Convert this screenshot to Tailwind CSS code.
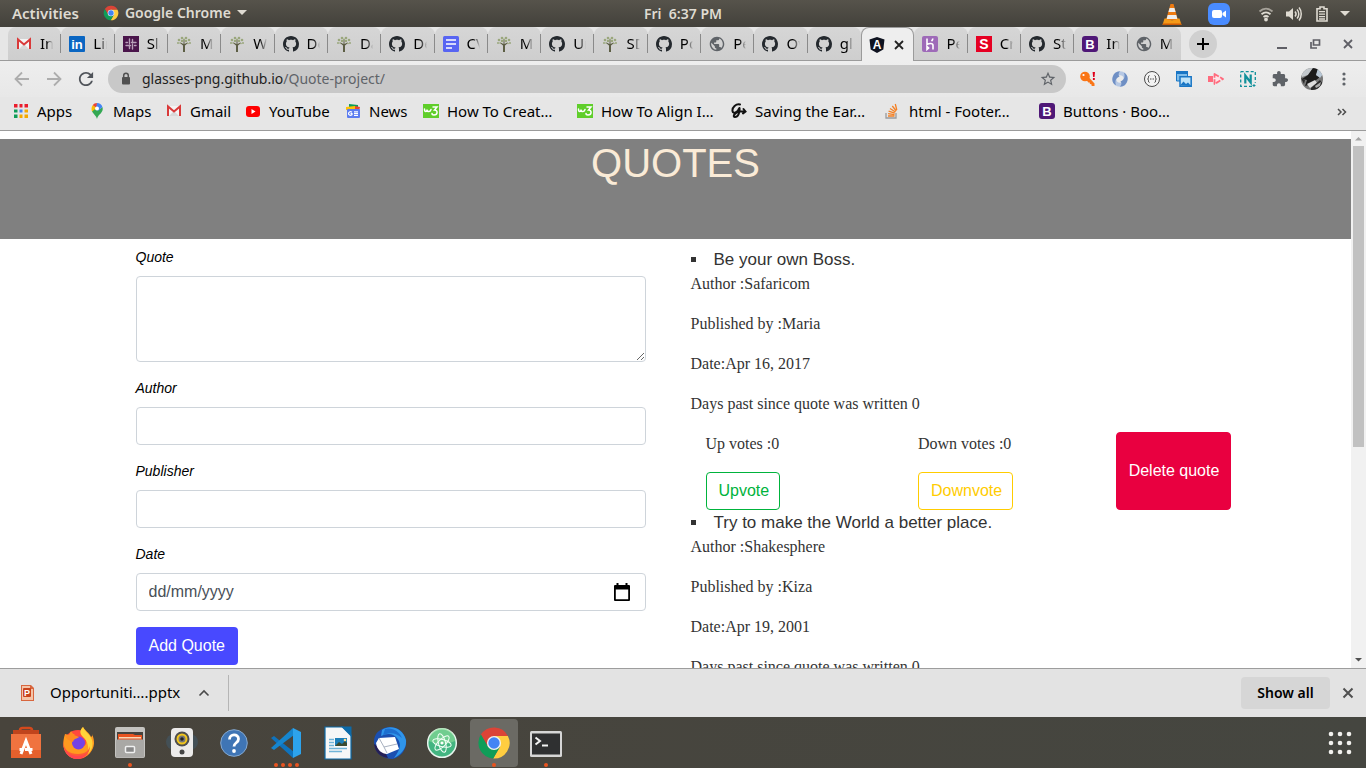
<!DOCTYPE html>
<html lang="en-GB">
<head>
<meta charset="utf-8">
<title>Quotes</title>
<script src="https://cdn.jsdelivr.net/npm/@tailwindcss/browser@4"></script>
</head>
<body class="h-screen flex flex-col overflow-hidden bg-[#e3e3e3] font-['Noto_Sans',sans-serif] text-sm text-[#1c1c1c]">

<svg class="hidden" aria-hidden="true">
  <symbol id="chrome" viewBox="0 0 48 48"><path fill="#db4437" d="M24 14H43.6A22 22 0 0 0 5.54 12.03L15.34 29Z"/><path fill="#ffcd40" d="M32.66 29L22.86 45.97A22 22 0 0 0 43.6 14H24Z"/><path fill="#0f9d58" d="M15.34 29L5.54 12.03A22 22 0 0 0 22.86 45.97L32.66 29Z"/><circle cx="24" cy="24" r="10" fill="#f1f1f1"/><circle cx="24" cy="24" r="8" fill="#4285f4"/></symbol>
  <symbol id="github" viewBox="0 0 16 16"><path fill="#24292e" d="M8 0C3.58 0 0 3.58 0 8c0 3.54 2.29 6.53 5.47 7.59.4.07.55-.17.55-.38 0-.19-.01-.82-.01-1.49-2.01.37-2.53-.49-2.69-.94-.09-.23-.48-.94-.82-1.13-.28-.15-.68-.52-.01-.53.63-.01 1.08.58 1.23.82.72 1.21 1.87.87 2.33.66.07-.52.28-.87.51-1.07-1.78-.2-3.64-.89-3.64-3.95 0-.87.31-1.59.82-2.15-.08-.2-.36-1.02.08-2.12 0 0 .67-.21 2.2.82.64-.18 1.32-.27 2-.27s1.36.09 2 .27c1.53-1.04 2.2-.82 2.2-.82.44 1.1.16 1.92.08 2.12.51.56.82 1.27.82 2.15 0 3.07-1.87 3.75-3.65 3.95.29.25.54.73.54 1.48 0 1.07-.01 1.93-.01 2.2 0 .21.15.46.55.38A8.01 8.01 0 0 0 16 8c0-4.42-3.58-8-8-8z"/></symbol>
  <symbol id="gmail" viewBox="0 0 16 16"><path fill="#f4f4f4" d="M1 3h14v10H1z"/><path fill="#d8d8d8" d="M3 13l5-5 5 5z"/><path fill="none" stroke="#d93a3a" stroke-width="2" d="M2 13V3.500l6 5 6-5V13"/></symbol>
  <symbol id="tree" viewBox="0 0 16 16"><path fill="#5d5f45" d="M7 16V9.500L4 7l.5-.5L7.500 8V4h1v4l3-1.500.5.5-3 2.500V16z"/><g fill="#9aa77c"><circle cx="3" cy="4" r="1.300"/><circle cx="6" cy="2" r="1.300"/><circle cx="10" cy="2" r="1.300"/><circle cx="13" cy="4" r="1.300"/><circle cx="14" cy="7" r="1"/><circle cx="2" cy="7" r="1"/><circle cx="6" cy="5" r="1.200"/><circle cx="10" cy="5" r="1.200"/><circle cx="12" cy="7.500" r=".8"/><circle cx="4" cy="7" r=".8"/><circle cx="8" cy="3.500" r="1"/></g></symbol>
  <symbol id="globe" viewBox="1 1 22 22"><path fill="#5f6368" d="M12 2C6.480 2 2 6.480 2 12s4.480 10 10 10 10-4.480 10-10S17.520 2 12 2zm-1 17.930c-3.950-.49-7-3.850-7-7.930 0-.62.08-1.210.21-1.790L9 15v1c0 1.100.9 2 2 2v1.930zm6.900-2.540c-.26-.81-1-1.390-1.900-1.390h-1v-3c0-.55-.45-1-1-1H8v-2h2c.55 0 1-.45 1-1V7h2c1.100 0 2-.9 2-2v-.41c2.930 1.190 5 4.060 5 7.410 0 2.080-.8 3.970-2.100 5.390z"/></symbol>
  <symbol id="boot" viewBox="0 0 16 16"><rect width="16" height="16" rx="3" fill="#4f1877"/><text x="8" y="13" text-anchor="middle" font-family="Liberation Sans" font-weight="700" font-size="13" fill="#fff">B</text></symbol>
  <symbol id="w3" viewBox="0 0 16 16"><rect y="1" width="16" height="14" fill="#5fce2a"/><path fill="none" stroke="#fff" stroke-width="1.500" stroke-linecap="round" d="M1.500 6c0 3.500 2.500 3 2.500.5C4 9 7 9.500 8 6.500M10 4h4l-2.500 3c3.500 0 3.500 5-.5 5-1 0-2-.5-2-1.500"/></symbol>
  <symbol id="docs" viewBox="0 0 16 16"><rect width="16" height="16" rx="1.500" fill="#5865f2"/><path stroke="#fff" stroke-width="1.600" d="M3 4h10M3 8h10M3 12h6"/></symbol>
</svg>

<!-- Desktop top bar -->
<header class="h-[27px] shrink-0 grid grid-cols-[1fr_auto_1fr] items-center bg-linear-to-b from-[#56534b] to-[#43413b] text-[#dfdbd2] text-sm font-semibold">
  <div class="flex items-center pl-3 gap-6">
    <button type="button" class="text-[15px]">Activities</button>
    <button type="button" class="flex items-center gap-1.5"><svg class="size-4"><use href="#chrome"/></svg>Google Chrome <svg class="w-2.5 h-1.5" viewBox="0 0 10 6"><path fill="currentColor" d="M0 0h10L5 5z"/></svg></button>
  </div>
  <button type="button" class="whitespace-pre">Fri  6:37 PM</button>
  <div class="flex items-center justify-end pr-4">
    <svg class="size-6 mr-6" viewBox="0 0 24 24"><path fill="#ee7a10" d="M10.500 2h3L18 18H6z"/><path fill="#eee" d="M9.600 6h4.800l1.200 4H8.400zM7.700 13h8.600l1.100 4H6.600z"/><path fill="#f59a18" d="M4.500 16.500h2c1 2.200 10 2.200 11 0h2L21.500 23h-19z"/><path fill="#cf5b05" d="M2.700 21.500h18.600v1.500H2.700z"/></svg>
    <svg class="size-[22px] mr-7" viewBox="0 0 22 22"><rect width="22" height="22" rx="6" fill="#4a8cff"/><rect x="4" y="7" width="10" height="8" rx="2" fill="#fff"/><path fill="#fff" d="M14.500 10l3.500-2.500v7L14.500 12z"/></svg>
    <svg class="size-4 mr-3" viewBox="0 0 16 16" fill="none" stroke="#dfdbd2" stroke-width="1.800"><path opacity=".6" d="M1.500 5.500c4-3.700 9-3.700 13 0"/><path d="M3.500 8.300c3-2.600 6-2.600 9 0M5.500 11c1.700-1.300 3.300-1.300 5 0"/><circle cx="8" cy="13.500" r="1" fill="#dfdbd2"/></svg>
    <svg class="size-4 mr-3" viewBox="0 0 16 16" fill="none" stroke="#dfdbd2" stroke-width="1.500"><path fill="#dfdbd2" stroke="none" d="M0 5.500h3L7 2v12l-4-3.500H0z"/><path d="M9 5.500c1.300 1.500 1.300 3.500 0 5M11 3.500c2.400 2.500 2.400 6.500 0 9M13 1.500c3 3.500 3 9.500 0 13"/></svg>
    <svg class="size-4 mr-2.5" viewBox="0 0 16 16"><path fill="none" stroke="#dfdbd2" stroke-width="1.600" d="M6 2.800V1h4v1.800h3V15H3V2.800z"/><path stroke="#dfdbd2" stroke-width="1.300" d="M5 5.700h6M5 8.200h6M5 10.600h6M5 13h6"/></svg>
    <svg class="w-2.5 h-1.5" viewBox="0 0 10 6"><path fill="#dfdbd2" d="M0 0h10L5 5z"/></svg>
  </div>
</header>

<!-- Tab strip -->
<nav class="h-[34px] shrink-0 flex items-stretch pl-2 bg-[#e6e6e6] border-b border-[#9b9b9b] text-black text-[15px]" aria-label="Tabs">
  <div class="flex-1 min-w-0 grid grid-cols-[repeat(22,minmax(0,1fr))] [&>button]:relative [&>button]:flex [&>button]:items-center [&>button]:gap-2 [&>button]:px-2 [&>button]:rounded-t-lg [&>button]:bg-linear-to-b [&>button]:from-[#d6d6d6] [&>button]:to-[#cecece] [&>button]:after:absolute [&>button]:after:right-0 [&>button]:after:inset-y-[7px] [&>button]:after:w-px [&>button]:after:bg-[#8a8a8a] [&_svg]:size-4 [&_svg]:shrink-0 [&_span]:min-w-0 [&_span]:overflow-hidden [&_span]:whitespace-nowrap [&_span]:mask-r-from-50%">
    <button type="button"><svg><use href="#gmail"/></svg><span>Inb</span></button>
    <button type="button"><svg viewBox="0 0 16 16"><rect width="16" height="16" rx="1" fill="#0a66c2"/><text x="8" y="12.500" text-anchor="middle" font-family="Liberation Sans" font-weight="700" font-size="13" fill="#fff">in</text></svg><span>Lin</span></button>
    <button type="button"><svg viewBox="0 0 16 16"><rect width="16" height="16" fill="#4a154b"/><path stroke="#b9a0ba" stroke-width="1.400" stroke-linecap="round" d="M6.500 3v4.500M9.500 8.500V13M9.500 3.500v3.500M6.500 9v3.500M3 6.500h1.500M8.500 6.500H13M3 9.500h4.500M11.500 9.500H13"/></svg><span>Sla</span></button>
    <button type="button"><svg><use href="#tree"/></svg><span>Mo</span></button>
    <button type="button"><svg><use href="#tree"/></svg><span>W</span></button>
    <button type="button"><svg><use href="#github"/></svg><span>De</span></button>
    <button type="button"><svg><use href="#tree"/></svg><span>Da</span></button>
    <button type="button"><svg><use href="#github"/></svg><span>De</span></button>
    <button type="button"><svg><use href="#docs"/></svg><span>CV</span></button>
    <button type="button"><svg><use href="#tree"/></svg><span>M</span></button>
    <button type="button"><svg><use href="#github"/></svg><span>Un</span></button>
    <button type="button"><svg><use href="#tree"/></svg><span>SD</span></button>
    <button type="button"><svg><use href="#github"/></svg><span>Po</span></button>
    <button type="button"><svg><use href="#globe"/></svg><span>Pe</span></button>
    <button type="button"><svg><use href="#github"/></svg><span>Ov</span></button>
    <button type="button" class="after:hidden"><svg><use href="#github"/></svg><span>gl</span></button>
    <div class="flex items-center gap-1.5 pl-[7px] -mb-px rounded-t-lg border-x border-t border-[#9b9b9b] bg-[#eee]">
      <svg viewBox="0 0 16 16"><path fill="#0f1320" d="M8 0l7.500 2.600-1.200 10L8 16l-6.300-3.400-1.200-10z"/><text x="8" y="12" text-anchor="middle" font-family="Liberation Sans" font-weight="700" font-size="12" fill="#fff">A</text></svg>
      <button type="button" aria-label="Close tab"><svg viewBox="0 0 16 16"><path stroke="#222" stroke-width="1.800" d="M4 4l8 8M12 4l-8 8"/></svg></button>
    </div>
    <button type="button"><svg viewBox="0 0 16 16"><rect width="16" height="16" rx="2" fill="#9e6ab8"/><path fill="none" stroke="#fff" stroke-width="1.600" d="M5 2.500v6c2-1.200 6-1.800 6 1v4M10.800 2.500c0 1-.5 2-1.300 2.700M5 10.500v3l1.600-1.500z"/></svg><span>Pe</span></button>
    <button type="button"><svg viewBox="0 0 16 16"><rect width="16" height="16" fill="#e60023"/><text x="8" y="13" text-anchor="middle" font-family="Liberation Sans" font-weight="700" font-size="14" fill="#fff">S</text></svg><span>Cr</span></button>
    <button type="button"><svg><use href="#github"/></svg><span>St</span></button>
    <button type="button"><svg><use href="#boot"/></svg><span>In</span></button>
    <button type="button" class="after:hidden"><svg><use href="#globe"/></svg><span>My</span></button>
  </div>
  <div class="w-[185px] shrink-0 flex items-center pl-2 pr-3">
    <button type="button" aria-label="New tab" class="size-7 rounded-full bg-[#d0d0d0] grid place-items-center mr-auto"><svg class="size-3" viewBox="0 0 12 12"><path stroke="#000" stroke-width="2" d="M6 0v12M0 6h12"/></svg></button>
    <div class="flex gap-[21px]">
      <button type="button" aria-label="Minimise"><svg class="size-3" viewBox="0 0 12 12"><path stroke="#5f5f66" stroke-width="2" d="M1 10h10"/></svg></button>
      <button type="button" aria-label="Restore"><svg class="size-3" viewBox="0 0 12 12"><path fill="none" stroke="#5f5f66" stroke-width="1.700" d="M4.500 2h6v5h-6zM2 4v6h6"/></svg></button>
      <button type="button" aria-label="Close"><svg class="size-3" viewBox="0 0 12 12"><path stroke="#5f5f66" stroke-width="1.800" d="M2 2l8 8M10 2l-8 8"/></svg></button>
    </div>
  </div>
</nav>

<!-- Address bar -->
<div class="h-9 shrink-0 flex items-center bg-linear-to-b from-[#eee] to-[#e8e8e8] pl-3.5 pr-3.5">
  <div class="flex gap-4 mr-3.5 [&_svg]:size-4">
    <button type="button" aria-label="Back"><svg viewBox="0 0 16 16"><path fill="none" stroke="#adadad" stroke-width="1.800" d="M15 8H2M8 1.500L1.500 8 8 14.500"/></svg></button>
    <button type="button" aria-label="Forward"><svg viewBox="0 0 16 16"><path fill="none" stroke="#adadad" stroke-width="1.800" d="M1 8h13M8 1.500L14.500 8 8 14.500"/></svg></button>
    <button type="button" aria-label="Reload"><svg viewBox="3 3 18 18"><path fill="#50545a" d="M17.650 6.350C16.200 4.900 14.210 4 12 4c-4.420 0-7.990 3.580-7.990 8s3.570 8 7.990 8c3.730 0 6.840-2.550 7.730-6h-2.080c-.82 2.330-3.040 4-5.650 4-3.310 0-6-2.690-6-6s2.690-6 6-6c1.660 0 3.140.69 4.220 1.780L13 11h7V4l-2.350 2.350z"/></svg></button>
  </div>
  <div class="flex-1 h-7 rounded-full bg-[#c8c8c8] flex items-center pl-2.5 pr-2.5">
    <svg class="size-4" viewBox="0 0 16 16"><rect x="4" y="6" width="8" height="7.500" rx="1" fill="#505050"/><path fill="none" stroke="#505050" stroke-width="1.500" d="M5.700 7V4.500a2.300 2.300 0 0 1 4.600 0V7"/></svg>
    <div class="ml-2 text-sm text-[#5f6368]"><span class="text-[#1e1e1e]">glasses-png.github.io</span>/Quote-project/</div>
    <button type="button" aria-label="Bookmark" class="ml-auto"><svg class="size-4" viewBox="1 1 22 22"><path fill="#5f6368" d="M22 9.240l-7.190-.62L12 2 9.190 8.630 2 9.240l5.460 4.730L5.820 21 12 17.270 18.180 21l-1.630-7.030L22 9.240zM12 15.400l-3.760 2.270 1-4.280-3.320-2.880 4.380-.38L12 6.100l1.710 4.040 4.380.38-3.320 2.880 1 4.280L12 15.400z"/></svg></button>
  </div>
  <div class="flex items-center gap-4 ml-3.5 [&_svg]:size-4">
    <svg viewBox="0 0 16 16"><g fill="#fa7516"><circle cx="5" cy="5.500" r="4.800"/><path d="M6 8.500l2.500-2.500 6 6.500v2.500h-2.800l-.3-1.700-1.500-.2-.2-1.600-1.300-.1z"/></g><circle cx="3.500" cy="4" r="1.100" fill="#fff"/><path fill="#e0001b" d="M12.600 1h2.400l-.5 5h-1.400zM12.900 7h1.900v2h-1.900z"/></svg>
    <svg viewBox="0 0 16 16"><circle cx="8" cy="8" r="5.700" fill="none" stroke="#b6c8e4" stroke-width="4"/><path fill="#6f8fc4" d="M8 .3A7.700 7.700 0 0 0 4 14.500C2.500 10 4 7 7.500 5.500 6 4 6.500 2 8 .3zM8 15.700A7.700 7.700 0 0 0 12 1.500c1.500 4.500 0 7.500-3.500 9 1.500 1.500 1 3.500-.5 5.200z"/></svg>
    <svg viewBox="0 0 16 16" fill="none" stroke="#4a4a4a"><circle cx="8" cy="8" r="7.500" fill="#f3f3f3"/><path d="M5.500 4.500c-2 0 0 3.500-2 3.500 2 0 0 3.500 2 3.500M10.500 4.500c2 0 0 3.500 2 3.500-2 0 0 3.500-2 3.500M6 8h1M7.500 8h1M9 8h1"/></svg>
    <svg viewBox="0 0 16 16"><path fill="#7fbdea" stroke="#1976c5" d="M.5 1h11v9H.5z"/><path fill="#1976c5" d="M0 0h12v3H0z"/><path fill="#bfe3f8" stroke="#1976c5" stroke-width="1.500" d="M4 5.800h11.200v9.400H4z"/><path fill="#1976c5" d="M4 14.500l3.500-4 2.500 2.500 2-1.500 3.200 3.500z"/></svg>
    <svg viewBox="0 0 16 16"><path fill="#ff6b7d" d="M0 5h5v6H0z"/><path fill="#ffe3e6" stroke="#ff6b7d" stroke-width="1.800" stroke-linejoin="round" d="M6.500 3l8.500 5-8.500 5z" stroke-dasharray="5 1.500"/></svg>
    <svg viewBox="0 0 16 16"><path fill="none" stroke="#10909a" stroke-width="1.300" stroke-dasharray="3 2" d="M.7.7h14.600v11M12 15.300H.7V.7"/><path fill="none" stroke="#10909a" stroke-width="2.200" d="M5.300 12.500V4.500l5.400 7V3.500"/><path stroke="#10909a" d="M12.500 14.500h3M14 13v3"/></svg>
    <svg viewBox="1 1 22 22"><path fill="#5f6368" d="M20.500 11H19V7c0-1.100-.9-2-2-2h-4V3.500C13 2.120 11.880 1 10.500 1S8 2.120 8 3.500V5H4c-1.100 0-1.990.9-1.990 2v3.800H3.500c1.490 0 2.700 1.210 2.700 2.700s-1.210 2.700-2.700 2.700H2V20c0 1.100.9 2 2 2h3.800v-1.500c0-1.490 1.210-2.700 2.700-2.700 1.490 0 2.700 1.210 2.700 2.700V22H17c1.100 0 2-.9 2-2v-4h1.500c1.380 0 2.500-1.120 2.500-2.500S21.880 11 20.500 11z"/></svg>
    <div class="size-[22px] -mx-[3px] rounded-full overflow-hidden"><svg viewBox="0 0 22 22" class="!size-full"><rect width="22" height="22" fill="#777"/><path fill="#c3c8cc" d="M0 0h12L7 7 1 9z"/><path fill="#1b1b1b" d="M12 0h6l-3 7 4 2-9 7-6 2 2-6-5-1 6-4z"/><path fill="#b9c8d6" d="M17 0l5 6-3 4-4-3z"/><path fill="#ddd" d="M6 16l8-4 2 3-7 5z"/><path fill="#2a2a2a" d="M10 20l9-8 3 4-6 6h-6zM0 10l4 2-1 4z"/><path fill="#aaa" d="M14 18l6-4-1 4-4 2z"/></svg></div>
    <svg viewBox="0 0 16 16" fill="#5f6368"><circle cx="8" cy="3" r="1.600"/><circle cx="8" cy="8" r="1.600"/><circle cx="8" cy="13" r="1.600"/></svg>
  </div>
</div>

<!-- Bookmarks -->
<div class="h-[34px] shrink-0 flex items-center bg-[#e6e6e6] border-b border-[#9b9b9b] pb-1 pl-[13px] text-black text-[15px] [&>a]:flex [&>a]:items-center [&>a]:gap-2 [&>a]:whitespace-nowrap [&>a]:shrink-0 [&_svg]:size-4 [&_svg]:shrink-0">
  <a href="#" class="w-[76px]"><svg viewBox="0 0 16 16"><g fill="#ea1d2c"><path d="M1 1h4v4H1zM6 1h4v4H6zM11 1h4v4h-4z"/></g><path fill="#0f9d58" d="M1 6h4v4H1zM1 11h4v4H1z"/><path fill="#4285f4" d="M6 6h4v4H6z"/><path fill="#f4a900" d="M11 6h4v4h-4zM6 11h4v4H6zM11 11h4v4h-4z"/><path stroke="#e6e6e6" stroke-width="2" d="M5.500 0v16M10.500 0v16M0 5.500h16M0 10.500h16"/></svg>Apps</a>
  <a href="#" class="w-[77px]"><svg viewBox="0 0 16 16"><path fill="#34a853" d="M8 16c-.5-3-4-5.500-5-7.500l3-4 5 1.500 2.500-2c1.500 6-4.500 7-5.500 12z"/><path fill="#4285f4" d="M8 0c2.500 0 4.700 1.600 5.400 4L9 8 6 4z"/><path fill="#ea4335" d="M3.700 2.200L7 5 8 0C6.300 0 4.700.8 3.700 2.200z"/><path fill="#fbbc04" d="M3 8.500C2 6 2.600 3.500 3.700 2.200L7.500 5z"/><circle cx="8" cy="5.500" r="2" fill="#fff"/></svg>Maps</a>
  <a href="#" class="w-[79px]"><svg><use href="#gmail"/></svg>Gmail</a>
  <a href="#" class="w-[100px]"><svg viewBox="0 0 16 16"><rect x="1" y="3" width="14" height="11" rx="3" fill="#f00"/><path fill="#fff" d="M6.500 6v5l4-2.500z"/></svg>YouTube</a>
  <a href="#" class="w-[78px]"><svg viewBox="0 0 16 16"><path fill="#0c9d58" d="M4 1l9 1v5H4z"/><path fill="#ea4335" d="M10 3l5 1-1 4h-4z"/><path fill="#ffc107" d="M1 4l9-1v4H1z"/><rect x="2" y="6" width="13" height="9" rx="1" fill="#5b7cf0"/><path fill="none" stroke="#fff" stroke-width="1.200" d="M7 9.200c-2-1.500-3.500.3-3.500 1.300s1.500 2.700 3.500 1.200v-1H5.500M9 8.800h4M9 10.500h4M9 12.300h4"/></svg>News</a>
  <a href="#" class="w-[154px]"><svg><use href="#w3"/></svg>How To Creat…</a>
  <a href="#" class="w-[154px]"><svg><use href="#w3"/></svg>How To Align I…</a>
  <a href="#" class="w-[154px]"><svg viewBox="0 0 16 16"><path fill="none" stroke="#111" stroke-width="2" stroke-linecap="round" d="M9 1.500C5 .5 1 4.500 1.500 8S7 9 8 5.500M8.500 5c.5 5-1.500 9-4.500 9-2.500 0-1-4 4-5.500h6M12.500 6l2 2.500-2.500 2"/></svg>Saving the Ear…</a>
  <a href="#" class="w-[154px]"><svg viewBox="0 0 16 16"><path fill="none" stroke="#9a9b9d" stroke-width="1.300" d="M1 10v5h10v-5"/><path stroke="#f48024" stroke-width="1.300" d="M3 13h6.500M3.100 10.700l6.400.9M3.600 8.200l6.200 2M5 5.500l5.500 3.500M7.300 3l4 5M10.300 1l1.500 6"/></svg>html - Footer…</a>
  <a href="#" class="w-[154px]"><svg><use href="#boot"/></svg>Buttons · Boo…</a>
  <button type="button" aria-label="More bookmarks" class="ml-auto mr-4"><svg viewBox="0 0 16 16"><path fill="none" stroke="#4c4c4c" stroke-width="1.500" d="M4 5l3 3-3 3M8.500 5l3 3-3 3"/></svg></button>
</div>

<!-- Page -->
<div class="flex-1 min-h-0 flex bg-white">
  <main class="flex-1 min-w-0 overflow-hidden pt-2 font-['Liberation_Sans',sans-serif] text-base text-[#212529]">
    <h1 class="h-[100px] bg-[#808080] text-[#faebd7] text-[40px] leading-[48px] text-center">QUOTES</h1>
    <div class="max-w-[1140px] mx-auto px-[15px] pt-2 grid grid-cols-2">
      <form class="pl-[15px] pr-[30px] [&_label]:block [&_label]:mb-2 [&_label]:italic [&_label]:text-sm [&_label]:leading-[21px] [&_label]:text-black [&_input]:block [&_input]:w-full [&_input]:h-[38px] [&_input]:px-3 [&_input]:mb-4 [&_input]:border [&_input]:border-[#ced4da] [&_input]:rounded [&_input]:text-[#495057]">
        <label for="quote">Quote</label>
        <textarea id="quote" class="block w-full h-[86px] px-3 py-1.5 mb-4 border border-[#ced4da] rounded resize-y"></textarea>
        <label for="author">Author</label>
        <input id="author" type="text">
        <label for="publisher">Publisher</label>
        <input id="publisher" type="text">
        <label for="date">Date</label>
        <div class="relative">
          <input id="date" type="text" inputmode="numeric" placeholder="dd/mm/yyyy" class="placeholder:text-[#495057]">
          <button type="button" aria-label="Open calendar" class="absolute right-4 inset-y-0"><svg class="w-4 h-[18px]" viewBox="0 0 16 18"><path fill="#000" d="M2.500 0h2v2h7V0h2v2H15a1 1 0 0 1 1 1v14a1 1 0 0 1-1 1H1a1 1 0 0 1-1-1V3a1 1 0 0 1 1-1h1.500zM1.800 6.500v9.700h12.400V6.500z"/></svg></button>
        </div>
        <button type="submit" class="h-[38px] px-[13px] rounded bg-[#4849ff] text-white">Add Quote</button>
      </form>
      <ul class="pl-[15px] list-[square] list-inside font-['Liberation_Serif',serif] text-[#333] leading-6">
        <li class="font-['Liberation_Sans',sans-serif] text-[17px] leading-[25px]">Be your own Boss.</li>
        <li class="list-none">
          <p class="mb-4">Author :Safaricom</p>
          <p class="mb-4">Published by :Maria</p>
          <p class="mb-4">Date:Apr 16, 2017</p>
          <p class="mb-4">Days past since quote was written 0</p>
          <div class="grid grid-cols-[1fr_1fr_115px] [&_button]:font-['Liberation_Sans',sans-serif] [&_button]:rounded [&_button]:border [&_button]:pl-3 [&_button]:pr-2.5">
            <div class="px-[15px]"><p class="mb-4">Up votes :0</p><button type="button" class="h-[38px] border-[#00b33c] text-[#00b33c]">Upvote</button></div>
            <div class="px-[15px]"><p class="mb-4">Down votes :0</p><button type="button" class="h-[38px] border-[#ffcc00] text-[#ffcc00]">Downvote</button></div>
            <button type="button" class="border-[#e90040] bg-[#e90040] text-white whitespace-nowrap">Delete quote</button>
          </div>
        </li>
        <li class="font-['Liberation_Sans',sans-serif] text-[17px] leading-[25px]">Try to make the World a better place.</li>
        <li class="list-none">
          <p class="mb-4">Author :Shakesphere</p>
          <p class="mb-4">Published by :Kiza</p>
          <p class="mb-4">Date:Apr 19, 2001</p>
          <p class="mb-4">Days past since quote was written 0</p>
        </li>
      </ul>
    </div>
  </main>
  <div class="w-[15px] shrink-0 flex flex-col items-center justify-between bg-[#f1f1f1]" aria-hidden="true">
    <svg class="w-[15px] h-[15px]" viewBox="0 0 15 15"><path fill="#a3a3a3" d="M4 9.500h7L7.500 6z"/></svg>
    <div class="w-[11px] h-[301px] mb-auto bg-[#c1c1c1]"></div>
    <svg class="w-[15px] h-[15px]" viewBox="0 0 15 15"><path fill="#505050" d="M4 5h7L7.500 8.500z"/></svg>
  </div>
</div>

<!-- Downloads -->
<div class="h-[49px] shrink-0 flex items-center border-t border-[#9d9d9d] bg-[#e3e3e3] pl-5 pr-3 text-black">
  <button type="button" class="flex items-center gap-3.5 text-[15px]"><svg class="size-4" viewBox="0 0 16 16"><path fill="#d8663e" d="M1 0h10l3 3v13H1z"/><path fill="#f4c4a8" d="M2 1h8v3h3v11H2z"/><rect x="3" y="3" width="8" height="9" rx="1" fill="#c9431c"/><text x="7" y="11" text-anchor="middle" font-family="Liberation Sans" font-weight="700" font-size="9" fill="#fff">P</text></svg>Opportuniti….pptx</button>
  <button type="button" aria-label="Download options" class="ml-4"><svg class="size-4" viewBox="0 0 16 16"><path fill="none" stroke="#4a4a4a" stroke-width="1.600" d="M3.500 10.500L8 6l4.500 4.500"/></svg></button>
  <div class="w-px h-9 ml-4 bg-[#b5b5b5]"></div>
  <button type="button" class="ml-auto mr-3 w-[89px] h-8 rounded bg-[#d6d6d6] font-semibold text-sm">Show all</button>
  <button type="button" aria-label="Close downloads"><svg class="size-3" viewBox="0 0 12 12"><path stroke="#505050" stroke-width="2" d="M1.500 1.500l9 9M10.500 1.500l-9 9"/></svg></button>
</div>

<!-- Dock -->
<footer class="h-[51px] shrink-0 flex items-center gap-1 px-0.5 bg-linear-to-r from-[#48443c] to-[#454640] [&>button]:relative [&>button]:w-12 [&>button]:h-12 [&>button]:grid [&>button]:place-items-center [&>button]:rounded-sm [&>button>svg]:size-[34px]">
  <button type="button" aria-label="Software"><svg viewBox="0 0 34 34"><path fill="none" stroke="#d4491c" stroke-width="2.500" d="M11 8V4.500q0-2.500 2.500-2.500h7Q23 2 23 4.500V8"/><path fill="#c0441c" d="M4 4h26v6H4z"/><path fill="#f0733f" d="M2 8h30v24H2z"/><path fill="#e5602c" d="M2 24h30v8H2z"/><path fill="none" stroke="#fff" stroke-width="3" d="M12 28l5-13 5 13M10.500 23.500h3M16 23.500h7.500"/></svg></button>
  <button type="button" aria-label="Firefox"><svg viewBox="0 0 34 34"><circle cx="17" cy="18.500" r="14.500" fill="#ff4a3d"/><path fill="#ff9a1f" d="M4 8c1 1 2 1 4 1 2-1 4-1 6-1-4 3-4 5-3 8 1 6 10 8 14 2 1-4-1-8-4-10-2-3-1-5 1-7 2 4 6 5 8 10 2-1 1-2 1-3 3 7 3 13-2 19-6 7-16 7-21 3-6-5-7-13-4-22z"/><path fill="#ffd43a" d="M22 1c2 5 7 7 9 13 2 7-2 12-4 14 1-6 0-13-5-17-4-4-3-7 0-10z"/><circle cx="17.500" cy="17" r="6.500" fill="#7542e5"/><path fill="#ff8b22" d="M4 8l4 1 2-4 3 4 5 2c-2 2-5 1-6 5-4-1-8-4-8-8z"/><path fill="#ff5a37" d="M2 16c1 8 6 12 15 12 8 0 11-4 12-8 0 7-5 13-13 13S2 26 2 16z"/><path fill="#ff2f6b" opacity=".5" d="M3 21c3 7 8 9 14 9 4 0 7-1 9-3-3 5-7 6-11 6-7-1-11-6-12-12z"/></svg></button>
  <button type="button" aria-label="Files"><svg viewBox="0 0 34 34"><rect x="2" y="1" width="30" height="31" rx="2" fill="#c4c3c0"/><path fill="#45423d" d="M4 6h26v8H4z"/><path fill="#e95420" d="M5 8h15l2 1h7v5H5z"/><path fill="#f7d9b8" d="M6 11h22v1.500H6z"/><rect x="3" y="13.500" width="28" height="18" rx="1" fill="#a9a8a5"/><rect x="12.500" y="20.500" width="9" height="6" rx="1" fill="#888" stroke="#f0f0f0" stroke-width="1.500"/></svg><i class="absolute bottom-0 size-1 rounded-full bg-[#e95420]"></i></button>
  <button type="button" aria-label="Rhythmbox"><svg viewBox="0 0 34 34"><circle cx="9" cy="16" r="8" fill="#3f5b70" opacity=".5"/><circle cx="25" cy="16" r="8" fill="#3f5b70" opacity=".5"/><rect x="6" y="2" width="22" height="29" rx="4" fill="#ecebea"/><circle cx="17" cy="13" r="7.500" fill="#4e4e4e"/><circle cx="17" cy="13" r="4.500" fill="#777" stroke="#f2c61b" stroke-width="2"/><circle cx="17" cy="13" r="1.800" fill="#222"/><circle cx="17" cy="26" r="2.500" fill="#454545"/></svg></button>
  <button type="button" aria-label="Help"><svg viewBox="0 0 34 34"><circle cx="17" cy="17" r="13.300" fill="#3f75b5" stroke="#86a9cf" stroke-width="1"/><path fill="none" stroke="#fff" stroke-width="2.800" d="M12.500 13.500c0-6 9-6 9-.5 0 4-4.500 3.500-4.500 7.500"/><circle cx="17" cy="25" r="1.900" fill="#fff"/></svg></button>
  <button type="button" aria-label="Visual Studio Code"><svg viewBox="0 0 34 34"><path fill="#0f73bd" d="M2 12l3-2 20 16-1 6z"/><path fill="#1686cf" d="M2 22l3 2L25 9l-1-7z"/><path fill="#2da3ec" d="M24 2l8 4v22l-8 4z"/></svg><i class="absolute bottom-0 flex gap-[3px]"><b class="size-1 rounded-full bg-[#e95420]"></b><b class="size-1 rounded-full bg-[#e95420]"></b><b class="size-1 rounded-full bg-[#e95420]"></b><b class="size-1 rounded-full bg-[#e95420]"></b></i></button>
  <button type="button" aria-label="LibreOffice Writer"><svg viewBox="0 0 34 34"><path fill="#f7f7f7" stroke="#0d6aa8" stroke-width="1.200" d="M4 1h18l8 8v24H4z"/><path fill="#0d6aa8" d="M20 .5h10.500V11z"/><path stroke="#70b4d8" stroke-width="1.600" d="M8 13.500h5M8 16.500h5M8 19.500h5M8 22.500h18M8 25.500h13"/><path fill="#1e7fb8" d="M14 12h12v8H14z"/><path fill="#3a4a30" d="M14 20l4-4 3 2 3-3 2 2v3z"/><circle cx="24" cy="14" r="1.300" fill="#ffe08a"/></svg></button>
  <button type="button" aria-label="Thunderbird"><svg viewBox="0 0 34 34"><path fill="#1b4fb0" d="M6 5C14-2 28 0 32 11c4 10-3 20-12 22C10 33 1 27 1 16 1 11 3 7 6 5z"/><path fill="#2f95ea" d="M9 4C17-2 30 2 33 14c1 8-5 15-12 18 6-8 8-14 3-20C20 7 14 7 8 10z"/><path fill="#1d6fd0" d="M12 3c7-2 14 2 17 9-6-5-11-6-19-3z"/><path fill="#251f57" d="M1 18c1 8 6 13 14 14l-4-8z"/><path fill="#fff" d="M3 17l3-5 16-1 4 12-12 5c-5 0-10-4-11-11z"/><path fill="none" stroke="#a9b2c0" d="M6 12l5 9 13-3M11 21l3 6"/></svg></button>
  <button type="button" aria-label="Atom"><svg viewBox="0 0 34 34"><circle cx="17" cy="17" r="14.300" fill="#43b581" stroke="#e8f5ee" stroke-width="1.500"/><path fill="#8fdd9a" opacity=".6" d="M4 15a13 13 0 0 1 26 0c-8 4-18 4-26 0z"/><g fill="none" stroke="#f2fff6" stroke-width="1"><ellipse cx="17" cy="17" rx="9.500" ry="3.600" transform="rotate(15 17 17)"/><ellipse cx="17" cy="17" rx="9.500" ry="3.600" transform="rotate(75 17 17)"/><ellipse cx="17" cy="17" rx="9.500" ry="3.600" transform="rotate(135 17 17)"/></g><circle cx="17" cy="17" r="1.500" fill="#fff"/></svg></button>
  <button type="button" aria-label="Google Chrome" class="bg-[#6b6a64]"><svg><use href="#chrome"/></svg><i class="absolute bottom-0 size-1 rounded-full bg-[#e95420]"></i></button>
  <button type="button" aria-label="Terminal"><svg viewBox="0 0 34 34"><rect x="1" y="5" width="32" height="26" rx="1.500" fill="#d6d6d6"/><rect x="3" y="7.500" width="28" height="21" fill="#2f3031"/><path fill="none" stroke="#f3f3f3" stroke-width="2" d="M6.500 11.500l4.500 3.500-4.500 3.500M13 19.500h6"/></svg><i class="absolute bottom-0 size-1 rounded-full bg-[#e95420]"></i></button>
  <button type="button" aria-label="Show Applications" class="ml-auto"><svg viewBox="0 0 34 34" fill="#f2f1ee"><circle cx="8" cy="8" r="2.300"/><circle cx="17" cy="8" r="2.300"/><circle cx="26" cy="8" r="2.300"/><circle cx="8" cy="17" r="2.300"/><circle cx="17" cy="17" r="2.300"/><circle cx="26" cy="17" r="2.300"/><circle cx="8" cy="26" r="2.300"/><circle cx="17" cy="26" r="2.300"/><circle cx="26" cy="26" r="2.300"/></svg></button>
</footer>
</body>
</html>
